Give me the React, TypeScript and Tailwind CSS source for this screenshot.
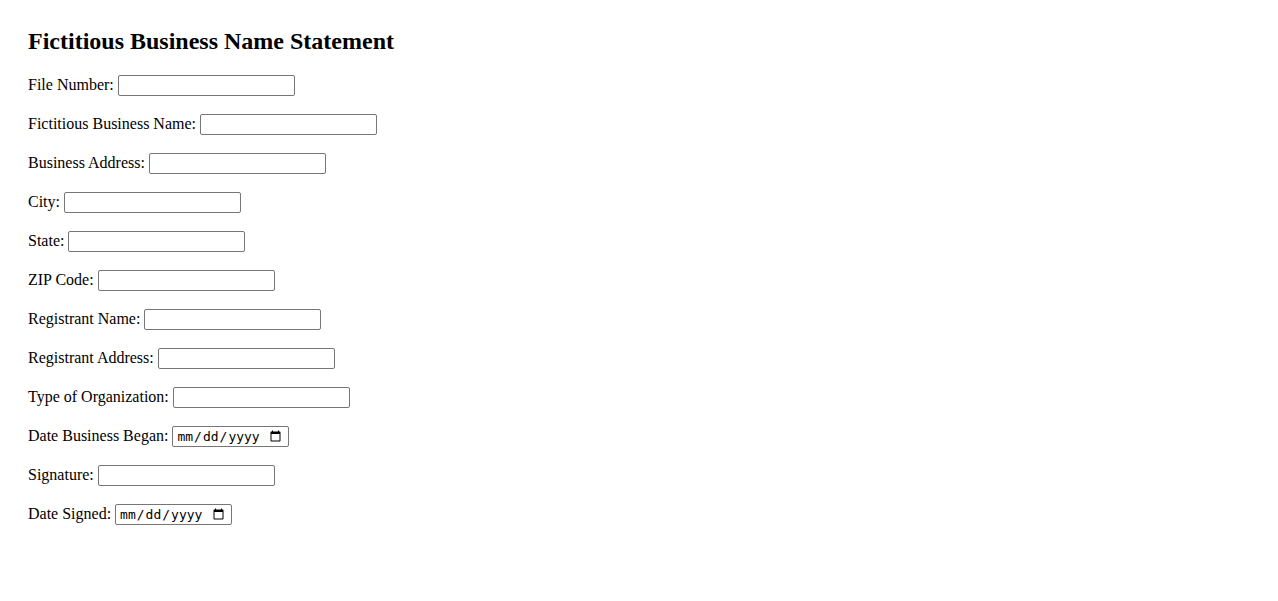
import React from "react";

const fields: { label: string; type: "text" | "date" }[] = [
  { label: "File Number:", type: "text" },
  { label: "Fictitious Business Name:", type: "text" },
  { label: "Business Address:", type: "text" },
  { label: "City:", type: "text" },
  { label: "State:", type: "text" },
  { label: "ZIP Code:", type: "text" },
  { label: "Registrant Name:", type: "text" },
  { label: "Registrant Address:", type: "text" },
  { label: "Type of Organization:", type: "text" },
  { label: "Date Business Began:", type: "date" },
  { label: "Signature:", type: "text" },
  { label: "Date Signed:", type: "date" },
];

export default function App() {
  return (
    <div className="min-h-[601px] bg-white text-black pl-[28px] pt-[27px] font-['Liberation_Serif','Times_New_Roman',serif]">
      <h2 className="text-[24px] font-bold leading-[28px] mb-[20px]">
        Fictitious Business Name Statement
      </h2>
      <form className="flex flex-col gap-[18px]">
        {fields.map((f) => (
          <div key={f.label} className="flex items-center h-[21px] text-[16px] leading-[18px]">
            <label className="pb-[2px]">{f.label}</label>
            {f.type === "text" ? (
              <input
                type="text"
                className="ml-[4px] w-[177px] h-[21px] border border-[#767676] rounded-[2px] px-[2px] bg-white text-[13.33px] font-['Liberation_Sans',Arial,sans-serif]"
              />
            ) : (
              <input
                type="date"
                className="ml-[4px] w-[116.5px] h-[21px] border border-[#767676] rounded-[2px] pl-[3px] pr-[4px] bg-white text-[13px] leading-[15px] font-['DejaVu_Sans_Mono','Liberation_Mono',monospace]"
              />
            )}
          </div>
        ))}
      </form>
    </div>
  );
}
